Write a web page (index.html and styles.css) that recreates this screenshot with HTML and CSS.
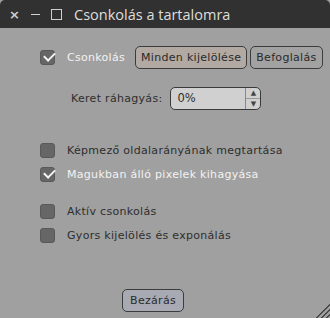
FILE: index.html
```html
<!DOCTYPE html>
<html lang="hu">
<head>
    <meta charset="UTF-8">
    <title>Csonkolás a tartalomra</title>
    <link rel="stylesheet" href="styles.css">
</head>
<body>
    <div class="window">
        <!-- Címsor -->
        <div class="titlebar">
            <span class="tb-btn tb-close">&#215;</span>
            <span class="tb-btn tb-min"></span>
            <span class="tb-btn tb-max"></span>
            <span class="title">Csonkolás a tartalomra</span>
        </div>

        <div class="content">
            <div class="row row-top">
                <label class="check on"><span class="box"></span>Csonkolás</label>
                <button class="btn btn-active">Minden kijelölése</button>
                <button class="btn">Befoglalás</button>
            </div>

            <div class="row row-margin">
                <span class="label">Keret ráhagyás:</span>
                <div class="spin">
                    <span class="spin-value">0%</span>
                    <span class="spin-arrows">
                        <span class="arrow">&#9650;</span>
                        <span class="arrow">&#9660;</span>
                    </span>
                </div>
            </div>

            <div class="group">
                <label class="check"><span class="box"></span>Képmező oldalarányának megtartása</label>
                <label class="check on"><span class="box"></span>Magukban álló pixelek kihagyása</label>
            </div>

            <div class="group">
                <label class="check"><span class="box"></span>Aktív csonkolás</label>
                <label class="check"><span class="box"></span>Gyors kijelölés és exponálás</label>
            </div>

            <div class="footer">
                <button class="btn btn-close">Bezárás</button>
            </div>
        </div>
        <div class="grip"></div>
    </div>
</body>
</html>
```

FILE: styles.css
```css
* {
    margin: 0;
    padding: 0;
    box-sizing: border-box;
}

body {
    background: #2b2b2b;
    font-family: "DejaVu Sans", sans-serif;
    font-size: 11px;
    color: #2e2e2e;
}

.window {
    position: relative;
    width: 330px;
    height: 318px;
    background: #a0a0a0;
    display: flex;
    flex-direction: column;
    overflow: hidden;
}

/* Címsor */
.titlebar {
    height: 28px;
    background: #313131;
    border-radius: 5px 5px 0 0;
    display: flex;
    align-items: center;
    padding-left: 9px;
    color: #dcdcdc;
}

.tb-btn {
    width: 11px;
    height: 11px;
    margin-right: 10px;
    display: flex;
    align-items: center;
    justify-content: center;
}

.tb-close {
    font-size: 13px;
    font-weight: bold;
    color: #cfcfcf;
    margin-top: 1px;
}

.tb-min::before {
    content: "";
    width: 9px;
    height: 1px;
    background: #d0d0d0;
    margin-top: 1px;
}

.tb-max::before {
    content: "";
    width: 9px;
    height: 9px;
    border: 1px solid #d0d0d0;
}

.title {
    margin-left: 2px;
    font-family: "Open Sans", sans-serif;
    font-size: 14.5px;
    color: #dedede;
}

.content {
    flex: 1;
    display: flex;
    flex-direction: column;
    padding: 18px 5px 6px 40px;
}

.row {
    display: flex;
    align-items: center;
}

.row-top .check {
    margin-right: 10px;
}

.row-margin {
    margin-top: 18px;
    padding-left: 31px;
}

.label {
    margin-right: 8px;
    letter-spacing: 0.3px;
}

.check {
    display: flex;
    align-items: center;
    height: 22px;
    letter-spacing: 0.3px;
}

.check.on {
    color: #f2f2f2;
}

.box {
    width: 15px;
    height: 15px;
    border-radius: 3px;
    background: #666;
    border: 1px solid #595959;
    margin-right: 12px;
    position: relative;
}

.check.on .box::after {
    content: "";
    position: absolute;
    left: 3px;
    top: 1px;
    width: 9px;
    height: 5px;
    border-left: 2px solid #f4f4f4;
    border-bottom: 2px solid #f4f4f4;
    transform: rotate(-45deg);
}

.btn {
    font-family: "DejaVu Sans", sans-serif;
    font-size: 11px;
    letter-spacing: 0.3px;
    color: #2a2a2a;
    height: 23px;
    padding: 0 5px;
    border: 1px solid #3c3c3c;
    border-radius: 5px;
    background: #a2a2a2;
}

.btn-active {
    background: #b1a9a2;
    margin-right: 3px;
}

.spin {
    width: 91px;
    height: 23px;
    border: 1px solid #3a3a3a;
    border-radius: 5px;
    background: #d0d0d0;
    display: flex;
}

.spin-value {
    flex: 1;
    padding-left: 6px;
    line-height: 21px;
    font-size: 11.5px;
}

.spin-arrows {
    width: 15px;
    border-left: 1px solid #888;
    display: flex;
    flex-direction: column;
}

.arrow {
    flex: 1;
    font-size: 7px;
    line-height: 10px;
    text-align: center;
    color: #444;
}

.arrow + .arrow {
    border-top: 1px solid #999;
}

.group {
    margin-top: 29px;
    display: flex;
    flex-direction: column;
    gap: 2px;
}

.group + .group {
    margin-top: 15px;
}

.footer {
    margin-top: auto;
    display: flex;
    padding-left: 82px;
}

.btn-close {
    background: #a8aab3;
    width: 62px;
    height: 23px;
}

.grip {
    position: absolute;
    right: 0;
    bottom: 0;
    width: 16px;
    height: 16px;
    background: repeating-linear-gradient(135deg, #a0a0a0 0 2px, #4a4a4a 2px 3.5px);
    clip-path: polygon(100% 0, 100% 100%, 0 100%);
}
```
